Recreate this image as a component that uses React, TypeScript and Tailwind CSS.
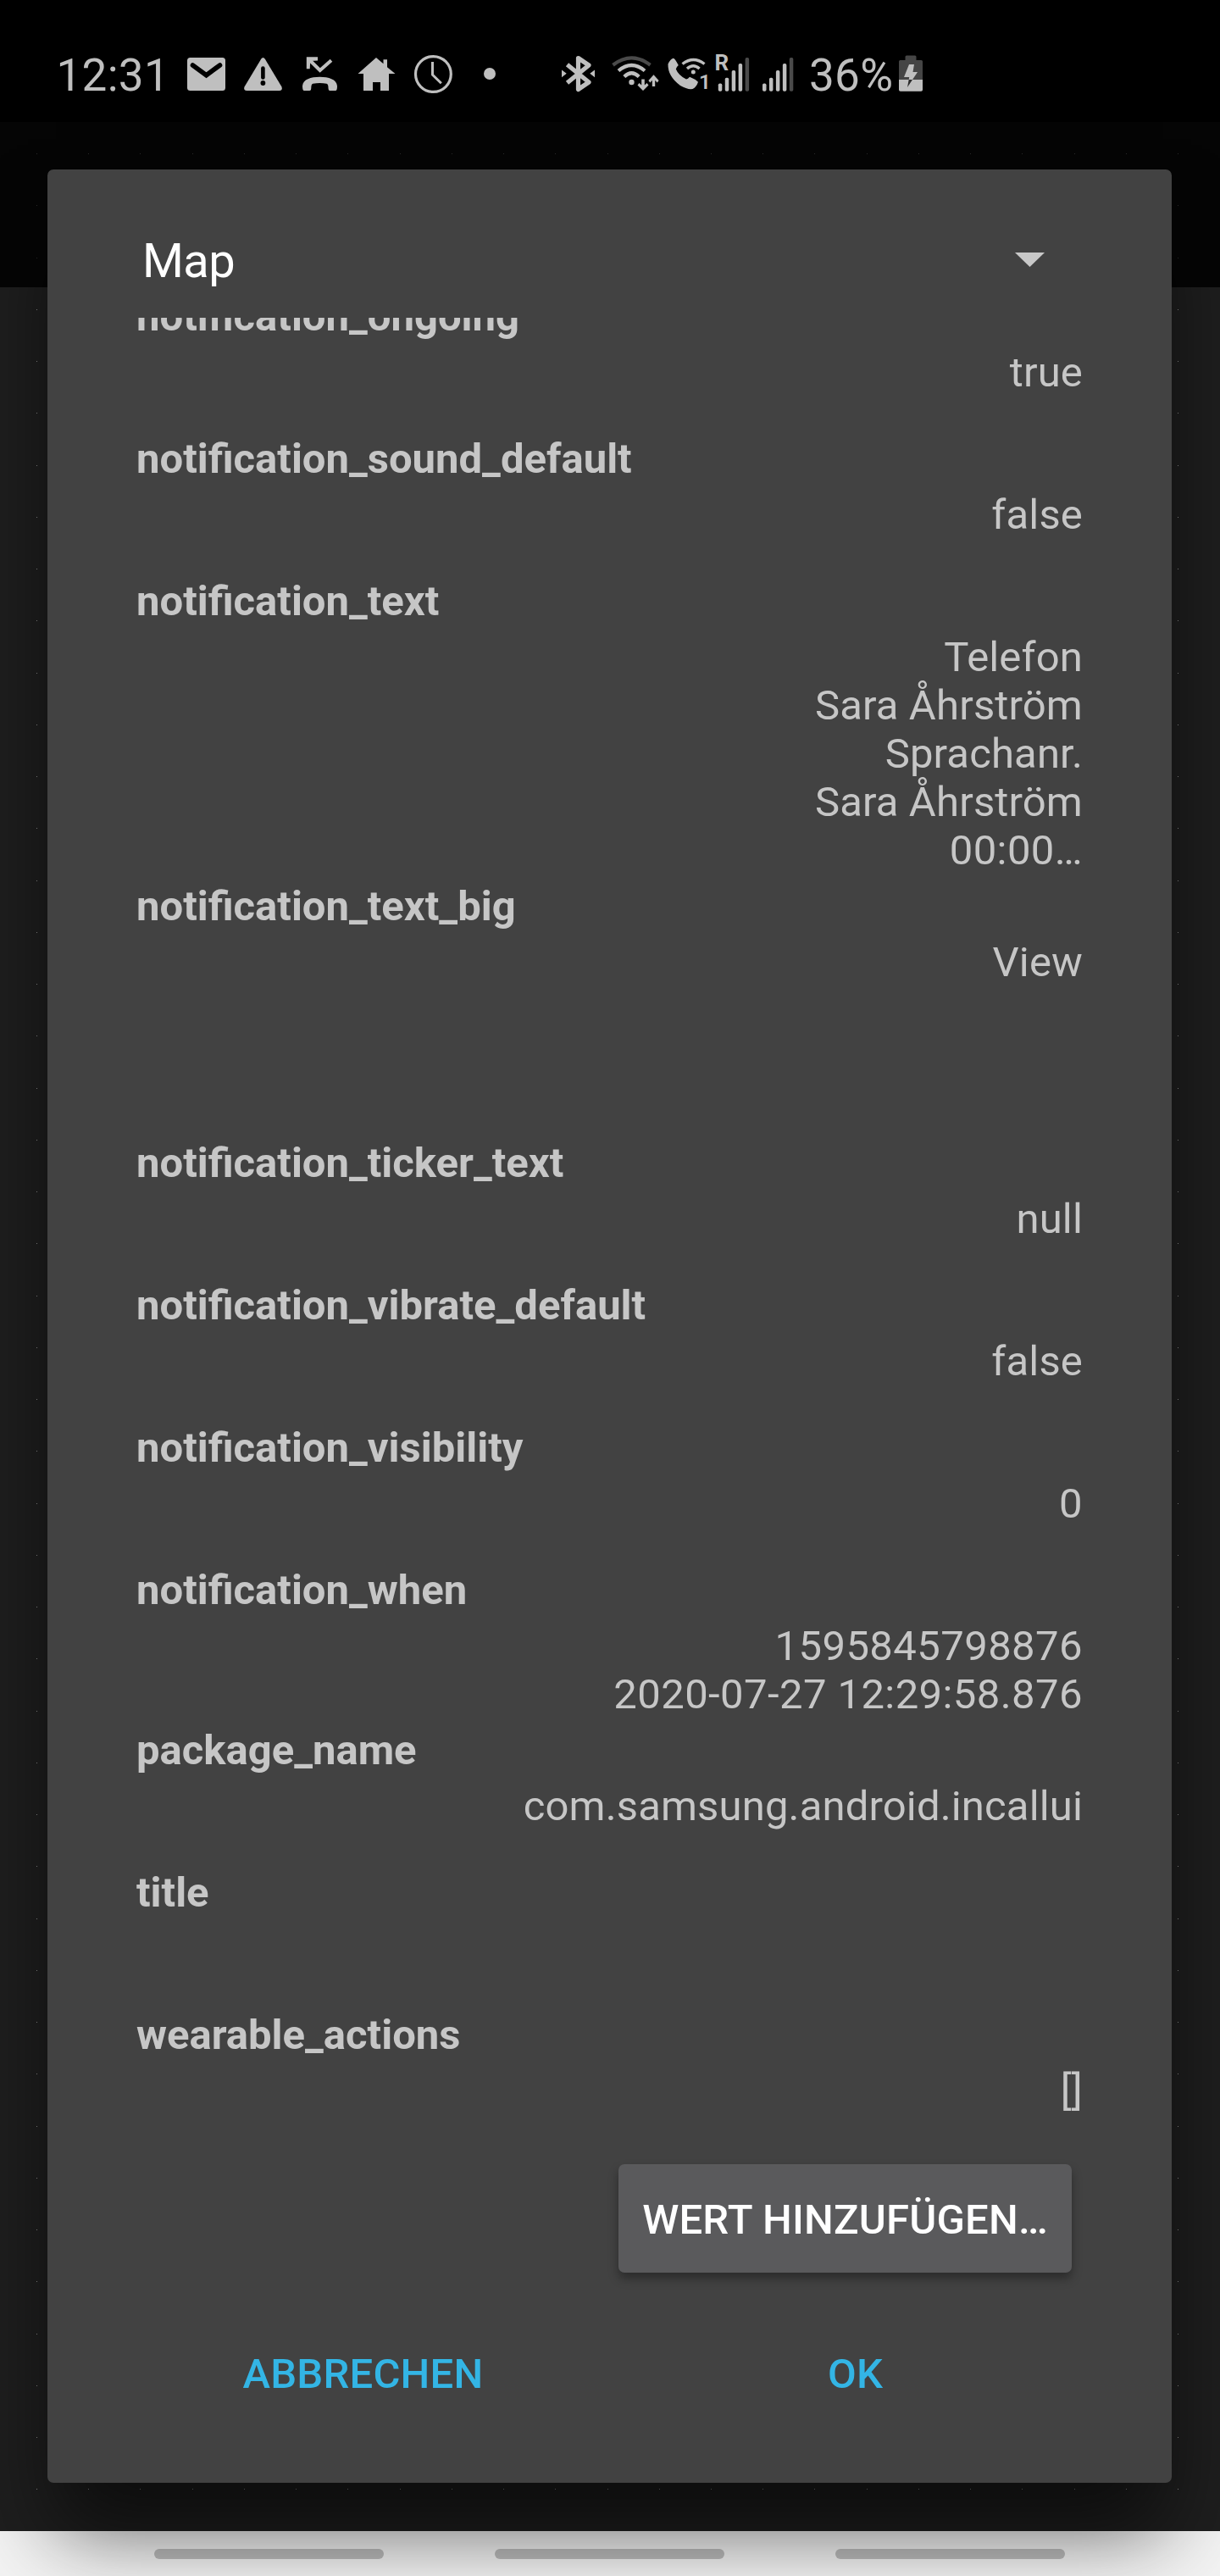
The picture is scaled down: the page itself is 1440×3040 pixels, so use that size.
type Entry = {
  name: string;
  lines: string[];
};

const entries: Entry[] = [
  { name: 'notification_ongoing', lines: ['true'] },
  { name: 'notification_sound_default', lines: ['false'] },
  { name: 'notification_text', lines: ['Telefon', 'Sara Åhrström', 'Sprachanr.', 'Sara Åhrström', '00:00…'] },
  { name: 'notification_text_big', lines: ['View', '', '', ''] },
  { name: 'notification_ticker_text', lines: ['null'] },
  { name: 'notification_vibrate_default', lines: ['false'] },
  { name: 'notification_visibility', lines: ['0'] },
  { name: 'notification_when', lines: ['1595845798876', '2020-07-27 12:29:58.876'] },
  { name: 'package_name', lines: ['com.samsung.android.incallui'] },
  { name: 'title', lines: [] },
  { name: 'wearable_actions', lines: ['[]'] },
];

// Grid dots of the canvas behind the dialog, only the ones along its edge are visible
const STEP = 61.23;
const dots: { x: number; y: number }[] = [];
for (let row = 0; row <= 45; row++) {
  for (let col = 0; col <= 22; col++) {
    if (row === 0 || row === 45 || col === 0 || col === 22) {
      dots.push({ x: Math.round(43 + col * STEP), y: Math.round(181 + row * 61.25) });
    }
  }
}

function SignalBars({ x }: { x: number }) {
  const tops = [98.5, 91.7, 83, 75, 68];
  return (
    <>
      {tops.map((top, i) => (
        <rect key={top} x={x + i * 7.95} y={top} width="4.5" height={107.8 - top} rx="1.8" fill={i === 4 ? '#4a4a4a' : '#bfbfbf'} />
      ))}
    </>
  );
}

function StatusBar() {
  return (
    <div className="h-36 flex items-start pt-[54px] pl-[66.5px] text-[#bfbfbf] bg-black">
      <span className="w-[133.5px] mt-px text-[53px] leading-[68px] tracking-[0.3px]">12:31</span>

      {/* Notification icons */}
      <svg className="w-[400px] h-[68px] shrink-0" viewBox="200 54 400 68" fill="#bfbfbf">
        <rect x="221" y="68" width="45" height="39" rx="3.5" />
        <path d="M227.5 77 243.5 88.7 259.5 77" fill="none" stroke="#000" strokeWidth="5.6" strokeLinecap="round" />

        <path d="M308.3 69.4q2.2-3 4.4 0l19.8 33.2q1.5 4.4-3 4.4h-38q-4.5 0-3-4.4z" />
        <path d="M310.4 80.5v11" stroke="#000" strokeWidth="4.6" strokeLinecap="round" />
        <circle cx="310.4" cy="98" r="2.9" fill="#000" />

        <path d="M364 69.5 377.7 83 391 71.3" fill="none" stroke="#bfbfbf" strokeWidth="4" />
        <path d="M361.8 67.3H375v4.2l-8.7.6-.6 9.2h-3.9z" />
        <path d="M357 101.5C357.5 93.5 367 90.7 377.4 90.7S397.5 93.5 398 101.5q0 5.5-2 5.5h-6.5q-2 0-2-3.5 0-4-2-4.7-8-1.8-16.2 0-2 .7-2 4.7 0 3.5-2 3.5H359q-2 0-2-5.5z" />

        <path d="M422.5 87 444 68l8.5 7.3v-5H457v9l9.5 7.7H459v20h-10V97h-9v10h-11V87z" />

        <circle cx="511.4" cy="87.5" r="20.9" fill="none" stroke="#bfbfbf" strokeWidth="3.2" />
        <path d="M510.5 73v15.2l10.3 10.1" fill="none" stroke="#bfbfbf" strokeWidth="3" strokeLinejoin="round" />

        <circle cx="578" cy="87" r="7" />
      </svg>

      {/* Connectivity icons */}
      <svg className="w-[355px] h-[68px] shrink-0" viewBox="600 54 355 68" fill="#bfbfbf">
        <path d="M669.5 76.3 695 97l-12.5 8.5v-37L695 77l-25.5 20.7" fill="none" stroke="#bfbfbf" strokeWidth="5.2" strokeLinejoin="round" />
        <path d="M663 82.5v8.7l5.7-4.4zM702 82.5v8.7l-5.7-4.4z" />

        <circle cx="745.5" cy="97" r="3.2" />
        <g fill="none" stroke="#bfbfbf" strokeWidth="4.2">
          <path d="M723.5 76.7q22-16.5 44 0" stroke="#4a4a4a" />
          <path d="M730 83.5q15.5-13 31 0" />
          <path d="M736.8 90.5q8.7-8.5 17.4 0" />
        </g>
        <path d="M757.2 93.5h3.6v7l2.7-2.6 2 2.5-6.5 6.6-6.500-6.600 2-2.500 2.700 2.600z" />
        <path d="M769.8 102h3.4v-7.2l2.5 2.6 1.9-2.5-6.1-6.7-6.1 6.7 1.9 2.5 2.5-2.6z" />

        <path d="M788.5 75.5q2.5-5.5 6.3-6.7 1.5-.2 6 8.2-2.8 2.5-3 4.5 3 7.5 12.2 12 2-.3 4-2.8 6.5 2.500 10 6-2 6-6.500 8.300-6 1-14.500-4-15-11-14.500-25.500z" />
        <circle cx="818.3" cy="85" r="2.5" />
        <g fill="none" stroke="#bfbfbf" strokeWidth="3.4">
          <path d="M805.5 75.5q13-10 26 0" />
          <path d="M811 81q7.3-6.5 14.6 0" />
        </g>
        <text x="825" y="105" fontSize="24.5" fontWeight="600">1</text>

        <text x="843.5" y="83.3" fontSize="26" fontWeight="700">R</text>
        <SignalBars x={847.8} />
        <SignalBars x={900} />
      </svg>

      <span className="w-[103px] mt-px text-[53px] leading-[68px] tracking-[0.3px]">36%</span>
      <svg className="w-8 h-[68px] shrink-0" viewBox="1058 54 32 68">
        <path d="M1068.5 71v-4q0-1.5 1.5-1.5h10q1.5 0 1.5 1.5v4h6q1.5 0 1.5 1.5V95h-28V72.5q0-1.5 1.5-1.5z" fill="#454545" />
        <path d="M1061 94h28v12q0 1.8-1.8 1.8h-24.4q-1.8 0-1.8-1.8z" fill="#bfbfbf" />
        <path d="M1077 94h-4.3L1071 103z" fill="#2b2b2b" />
        <path d="M1073 76h6l-1.5 9h5.5l-6 9h-4.3l.5-3h-6.2z" fill="#bfbfbf" />
      </svg>
    </div>
  );
}

function EntryRow({ entry }: { entry: Entry }) {
  return (
    <div>
      <div className="h-[75px] py-[9px] font-bold">{entry.name}</div>
      <div className="min-h-[93px] text-right">
        {entry.lines.map((line, i) => (
          <div key={i} className={/^\d/.test(line) ? 'h-[57px] tracking-[0.42px]' : 'h-[57px] tracking-[0.15px]'}>
            {line}
          </div>
        ))}
      </div>
    </div>
  );
}

function MapDialog() {
  return (
    <div className="absolute left-14 top-[200px] w-[1327px] h-[2730px] flex flex-col rounded-[7px] bg-[#424242] shadow-[0_66px_92px_-10px_rgba(0,0,0,0.6)]">
      {/* Type spinner */}
      <div className="h-[175px] pl-28 pr-[150px] flex items-center justify-between">
        <span className="mt-10 text-[56px] leading-16 tracking-[-0.6px] text-white">Map</span>
        <svg className="w-[35px] h-[17px] mt-[38px]" viewBox="0 0 35 17" fill="#c8c8c8">
          <path d="M0 0h35L17.5 17z" />
        </svg>
      </div>

      {/* Scrolled list of entries */}
      <div className="h-[2157px] overflow-hidden px-[105px] text-[49px] leading-[57px] text-[#c6c6c6]">
        <div className="-mt-[39px]">
          {entries.map((entry) => (
            <EntryRow key={entry.name} entry={entry} />
          ))}
        </div>
      </div>

      <div className="flex justify-end pt-[22px] pr-[118px]">
        <button className="w-[535px] h-32 pt-[3px] rounded-[7px] bg-[#5a5a5c] text-[49px] font-medium tracking-[0.2px] text-white whitespace-nowrap shadow-[0_7px_12px_rgba(0,0,0,0.35)]">
          WERT HINZUFÜGEN…
        </button>
      </div>

      <div className="flex mt-[52px] pl-20 pr-[83px] text-[49px] leading-[136px] font-medium tracking-[0.2px] text-[#33b5e5]">
        <button className="flex-1 pl-[2px]">ABBRECHEN</button>
        <button className="flex-1">OK</button>
      </div>
    </div>
  );
}

export default function App() {
  return (
    <div className="relative w-[1440px] h-[3040px] overflow-hidden flex flex-col bg-[#1e1e1e] font-[Roboto,sans-serif]">
      <StatusBar />
      <div className="h-[195px] bg-[#050505]" />
      <div className="flex-1" />

      {/* Navigation bar */}
      <div className="h-[53px] flex items-start pt-[21px] pl-[182px] gap-[131px] bg-[#f3f3f3]">
        <div className="w-[271px] h-3 rounded-full bg-[#bcbcbc]" />
        <div className="w-[271px] h-3 rounded-full bg-[#bcbcbc]" />
        <div className="w-[271px] h-3 rounded-full bg-[#bcbcbc]" />
      </div>

      <svg className="absolute inset-0 w-full h-full" viewBox="0 0 1440 3040">
        {dots.map((dot) => (
          <rect key={`${dot.x}-${dot.y}`} x={dot.x} y={dot.y} width="1" height="1" fill={dot.y < 339 ? '#2a2a2a' : '#8a8a8a'} />
        ))}
      </svg>

      <MapDialog />
    </div>
  );
}
